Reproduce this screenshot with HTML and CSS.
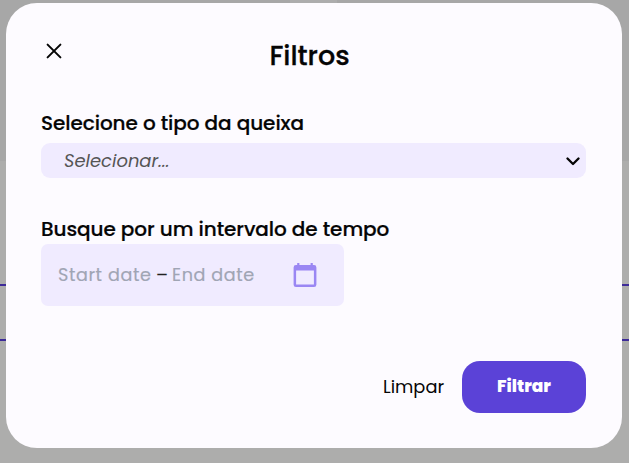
FILE: index.html
```html
<!DOCTYPE html>
<html lang="pt-BR">
<head>
<meta charset="utf-8">
<title>Filtros</title>
<link rel="stylesheet" href="styles.css">
</head>
<body>
<div class="backdrop">
  <section class="modal" role="dialog" aria-labelledby="title">
    <header class="header">
      <button class="close" aria-label="Fechar">
        <svg width="16" height="16" viewBox="0 0 16 16"><path d="M1.6 1.6 14.4 14.4M14.4 1.6 1.6 14.4"/></svg>
      </button>
      <h1 class="title" id="title">Filtros</h1>
    </header>
    <h2 class="label label-type">Selecione o tipo da queixa</h2>
    <div class="select">
      <span class="placeholder">Selecionar...</span>
      <svg class="chevron" width="14" height="9" viewBox="0 0 14 9"><path d="M1.5 1.5 7 7 12.5 1.5"/></svg>
    </div>
    <h2 class="label label-date">Busque por um intervalo de tempo</h2>
    <div class="range">
      <span class="start">Start date</span><span class="dash">–</span><span class="end">End date</span>
      <svg class="calendar" width="24" height="26" viewBox="0 0 24 26"><path fill-rule="evenodd" d="M4.2 1H6.4V3H17.6V1H19.8V3H21Q23.4 3 23.4 5.4V22.7Q23.4 25 21 25H3Q.6 25 .6 22.7V5.4Q.6 3 3 3H4.2ZM3.1 8.5V22.5H20.9V8.5Z"/></svg>
    </div>
    <footer class="actions">
      <button class="clear">Limpar</button>
      <button class="submit"><span class="submit-text">Filtrar</span></button>
    </footer>
  </section>
</div>
</body>
</html>
```
FILE: styles.css
```css
* { box-sizing: border-box; }
body { margin: 0; font-family: Poppins, Inter, sans-serif; color: #050505; }
button { border: 0; padding: 0; background: none; font: inherit; color: inherit; }
svg { display: block; flex: none; }
.backdrop {
  width: 629px; height: 463px; padding: 3px 7px 15px 6px; overflow: hidden;
  background:
    linear-gradient(#3d2a98, #3d2a98) 0 284px / 100% 2px no-repeat,
    linear-gradient(#3d2a98, #3d2a98) 0 339px / 100% 2px no-repeat,
    linear-gradient(#adadad, #adadad) 290px 0 / 47px 3px no-repeat,
    linear-gradient(#a7a7a7 161px, #adadac 161px);
}
.modal { height: 445px; padding: 0 36px 0 35px; border-radius: 31px; background: #fdfbff; }
.header { display: grid; grid-template-columns: 80px 1fr 80px; height: 106px; }
.close { width: 16px; height: 16px; margin: 40px 0 0 5px; }
.close path { fill: none; stroke: #050505; stroke-width: 2; stroke-linecap: round; }
.title { margin: 37px 0 0; padding-right: 8px; text-align: center; font-size: 27px; line-height: 32px; font-weight: 500; white-space: nowrap; -webkit-text-stroke: 0.3px #050505; }
.label { margin: 0; height: 28px; line-height: 28px; font-size: 20px; font-weight: 500; letter-spacing: -0.07px; white-space: nowrap; -webkit-text-stroke: 0.2px #050505; }
.label-type { margin-bottom: 6px; }
.select { display: flex; align-items: center; justify-content: space-between; height: 35px; padding: 0 6px 0 23px; border-radius: 9px; background: #f0ebff; }
.placeholder { font-size: 17.95px; font-style: italic; color: #555; }
.chevron { margin-top: 1px; }
.chevron path { fill: none; stroke: #050505; stroke-width: 2.3; stroke-linecap: round; stroke-linejoin: round; }
.label-date { margin-top: 37px; }
.range { display: flex; align-items: center; width: 303px; height: 62px; margin-top: 1px; padding-left: 17px; border-radius: 7px; background: #f0ebff; font-size: 17.6px; letter-spacing: 0.6px; color: #a0a5b4; white-space: nowrap; -webkit-text-stroke: 0.15px currentColor; }
.start { width: 98px; }
.dash { width: 16px; color: #222; }
.end { width: 121px; }
.calendar { fill: #9a86f3; }
.actions { display: flex; justify-content: flex-end; margin-top: 55px; gap: 18px; }
.clear { width: 61px; height: 52px; padding-bottom: 1px; font-size: 17.8px; text-align: left; white-space: nowrap; }
.submit { width: 124px; height: 52px; padding-bottom: 2px; border-radius: 18px; background: #5b42d7; color: #fff; font-size: 17px; font-weight: 800; }
```
